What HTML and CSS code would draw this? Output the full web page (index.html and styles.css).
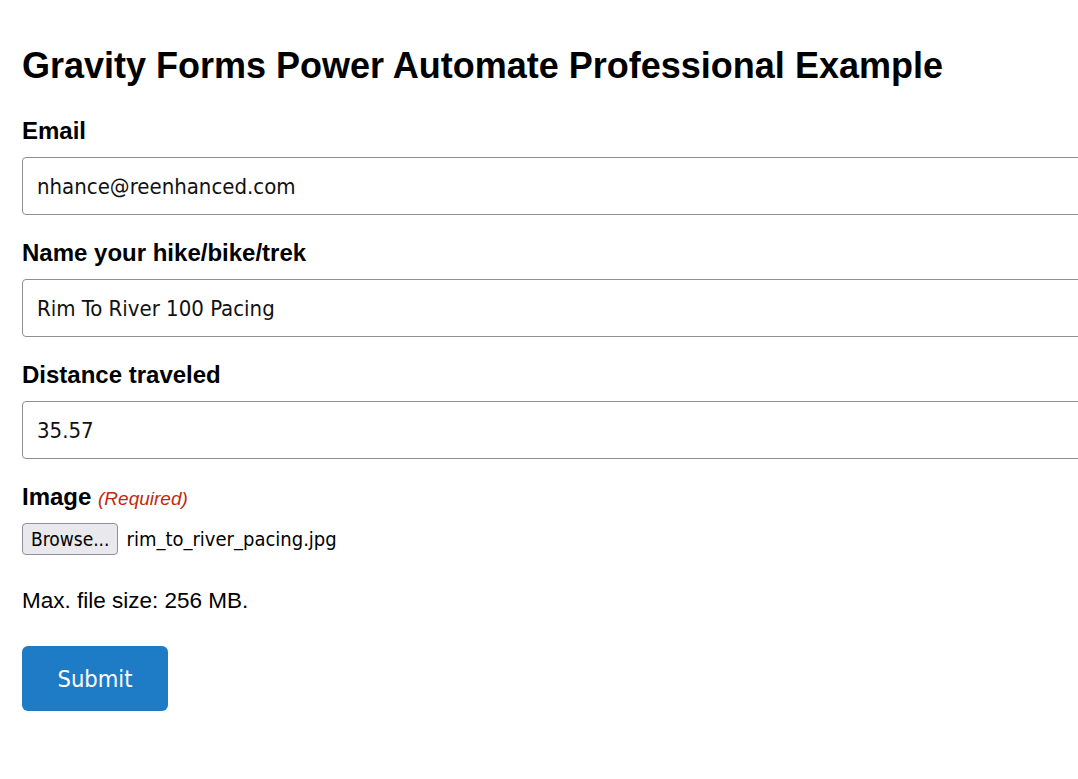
FILE: index.html
```html
<!DOCTYPE html>
<html lang="en">
<head>
    <meta charset="UTF-8">
    <meta name="viewport" content="width=device-width, initial-scale=1.0">
    <title>Gravity Forms Power Automate Professional Example</title>
    <link rel="stylesheet" href="styles.css">
</head>
<body>
    <div class="container">
        <h1>Gravity Forms Power Automate Professional Example</h1>
        <form class="gform" onsubmit="return false">
            <div class="field">
                <label for="input-email">Email</label>
                <input type="text" id="input-email" value="nhance@reenhanced.com">
            </div>
            <div class="field">
                <label for="input-name">Name your hike/bike/trek</label>
                <input type="text" id="input-name" value="Rim To River 100 Pacing">
            </div>
            <div class="field">
                <label for="input-distance">Distance traveled</label>
                <input type="text" id="input-distance" value="35.57">
            </div>
            <div class="field field-upload">
                <label>Image <span class="required">(Required)</span></label>
                <div class="file-row">
                    <span class="browse">Browse...</span>
                    <span class="file-name">rim_to_river_pacing.jpg</span>
                </div>
                <p class="file-note">Max. file size: 256 MB.</p>
            </div>
            <button type="submit" class="submit">Submit</button>
        </form>
    </div>
</body>
</html>
```

FILE: styles.css
```css
html {
    overflow-x: hidden;
}
body {
    font-family: "Liberation Sans", Arial, sans-serif;
    background-color: #ffffff;
    color: #000000;
    margin: 0;
    padding: 0 22px;
}
.container {
    width: 1100px;
}
h1 {
    font-size: 36px;
    font-weight: bold;
    margin: 45px 0 30px;
    line-height: 42px;
}
.field {
    margin-bottom: 24px;
}
.field label {
    display: block;
    font-size: 24px;
    font-weight: bold;
    line-height: 28px;
    margin-bottom: 12px;
}
.field-upload label {
    margin-bottom: 10px;
}
.field input {
    display: block;
    box-sizing: border-box;
    width: 100%;
    height: 58px;
    padding: 0 14px;
    border: 1px solid #8c8f94;
    border-radius: 4px;
    font-family: "DejaVu Sans Condensed", "DejaVu Sans", sans-serif;
    font-size: 22px;
    color: #111111;
    background-color: #ffffff;
}
.required {
    color: #c02b0a;
    font-style: italic;
    font-weight: normal;
    font-size: 19px;
}
.file-row {
    display: flex;
    align-items: center;
    gap: 8px;
}
.browse {
    box-sizing: border-box;
    height: 32px;
    line-height: 30px;
    font-family: "DejaVu Sans Condensed", "DejaVu Sans", sans-serif;
    font-size: 19px;
    padding: 0 8px;
    border: 1px solid #8f8f9d;
    border-radius: 4px;
    background-color: #e9e9ed;
}
.file-name {
    font-family: "DejaVu Sans Condensed", "DejaVu Sans", sans-serif;
    font-size: 20px;
}
.file-note {
    font-size: 22.5px;
    line-height: 26px;
    margin: 33px 0 32px;
}
.submit {
    display: block;
    font-family: "DejaVu Sans Condensed", "DejaVu Sans", sans-serif;
    font-size: 23.5px;
    color: #ffffff;
    background-color: #1e7bc6;
    border: none;
    border-radius: 6px;
    width: 146px;
    height: 65px;
    cursor: pointer;
}
```
